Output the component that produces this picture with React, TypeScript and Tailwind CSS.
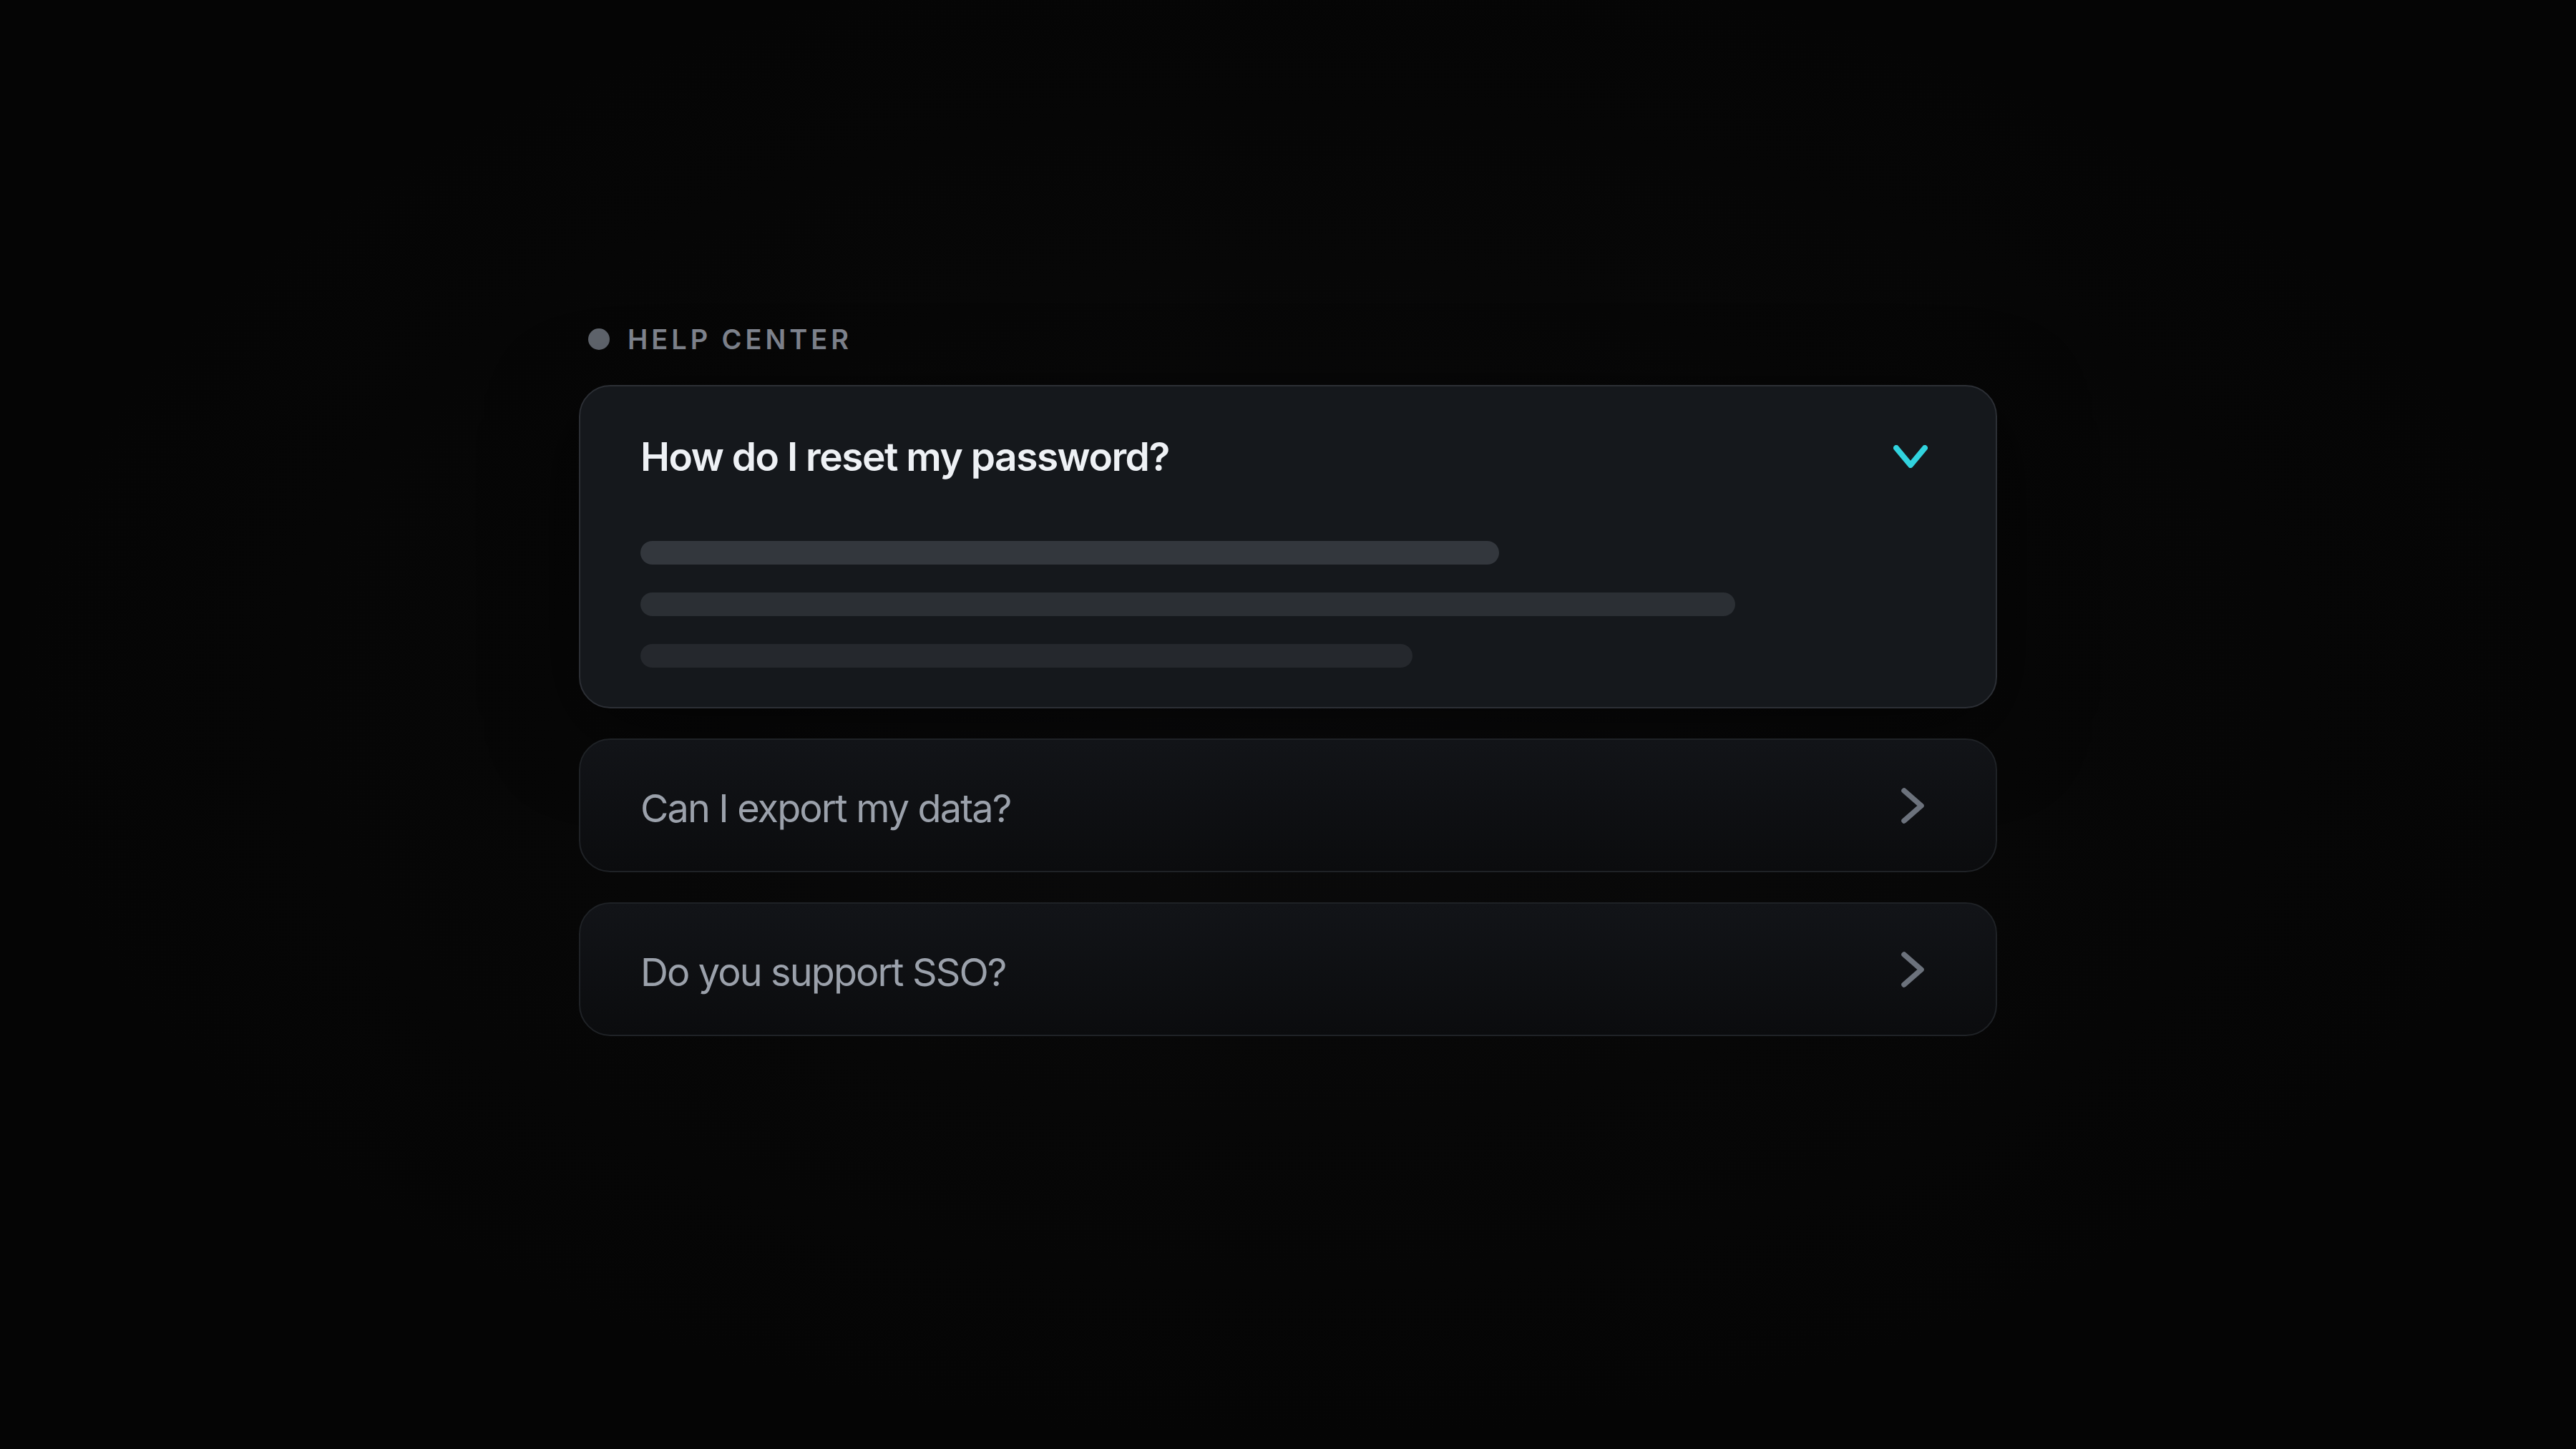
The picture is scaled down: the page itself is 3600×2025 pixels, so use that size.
import React from "react";

const faqs = [
  { q: "Can I export my data?" },
  { q: "Do you support SSO?" },
];

function ChevronDown() {
  return (
    <svg width="48" height="32" viewBox="0 0 48 32" fill="none" className="shrink-0">
      <path d="M4 4 L24 28 L44 4" stroke="#31d3de" strokeWidth="8" strokeLinecap="round" strokeLinejoin="round" />
    </svg>
  );
}

function ChevronRight() {
  return (
    <svg width="32" height="50" viewBox="0 0 32 50" fill="none" className="shrink-0">
      <path d="M4 4 L28 25 L4 46" stroke="#6c727c" strokeWidth="7.5" strokeLinecap="round" strokeLinejoin="round" />
    </svg>
  );
}

export default function App() {
  return (
    <div
      className="min-h-[2025px] w-full bg-[#050505] bg-[radial-gradient(ellipse_at_50%_48%,#0b0b0c_0%,#070707_40%,#050505_70%)]"
      style={{ fontFamily: "Inter, 'Noto Sans', sans-serif" }}
    >
      <div className="mx-auto flex w-[1982px] flex-col pt-[450px]">
        {/* label */}
        <div className="flex h-[48px] items-center pl-[13px]">
          <span className="h-[30px] w-[30px] rounded-full bg-[#5f646c]" />
          <span className="ml-[25px] text-[38px] leading-[48px] font-semibold tracking-[0.13em] text-[#80858f]">
            HELP CENTER
          </span>
        </div>

        <div className="mt-[40px] flex flex-col gap-[42px]">
          {/* open item */}
          <div className="rounded-[44px] border-2 border-[#2c2f35] bg-[#15181c] pt-[65px] pb-[55px] pl-[84px] pr-[95px] shadow-[0_30px_120px_rgba(0,0,0,0.6)]">
            <div className="flex items-center justify-between">
              <h2 className="text-[55px] leading-[66px] font-semibold tracking-[-0.027em] text-[#eef1f5]">
                How do I reset my password?
              </h2>
              <ChevronDown />
            </div>
            <div className="mt-[85px] flex flex-col gap-[39px]">
              <div className="h-[33px] w-[1200px] rounded-full bg-[#33373d]" />
              <div className="h-[33px] w-[1530px] rounded-full bg-[#2b2f34]" />
              <div className="h-[33px] w-[1079px] rounded-full bg-[#25282d]" />
            </div>
          </div>

          {faqs.map((f) => (
            <div
              key={f.q}
              className="flex h-[187px] items-center justify-between rounded-[44px] border-2 border-[#1f2226] bg-gradient-to-b from-[#121418] to-[#0b0c0e] pl-[84px] pr-[100px]"
            >
              <span className="mt-[8px] text-[54px] leading-[66px] font-normal tracking-[-0.035em] text-[#9ba1ab]">
                {f.q}
              </span>
              <ChevronRight />
            </div>
          ))}
        </div>
      </div>
    </div>
  );
}
